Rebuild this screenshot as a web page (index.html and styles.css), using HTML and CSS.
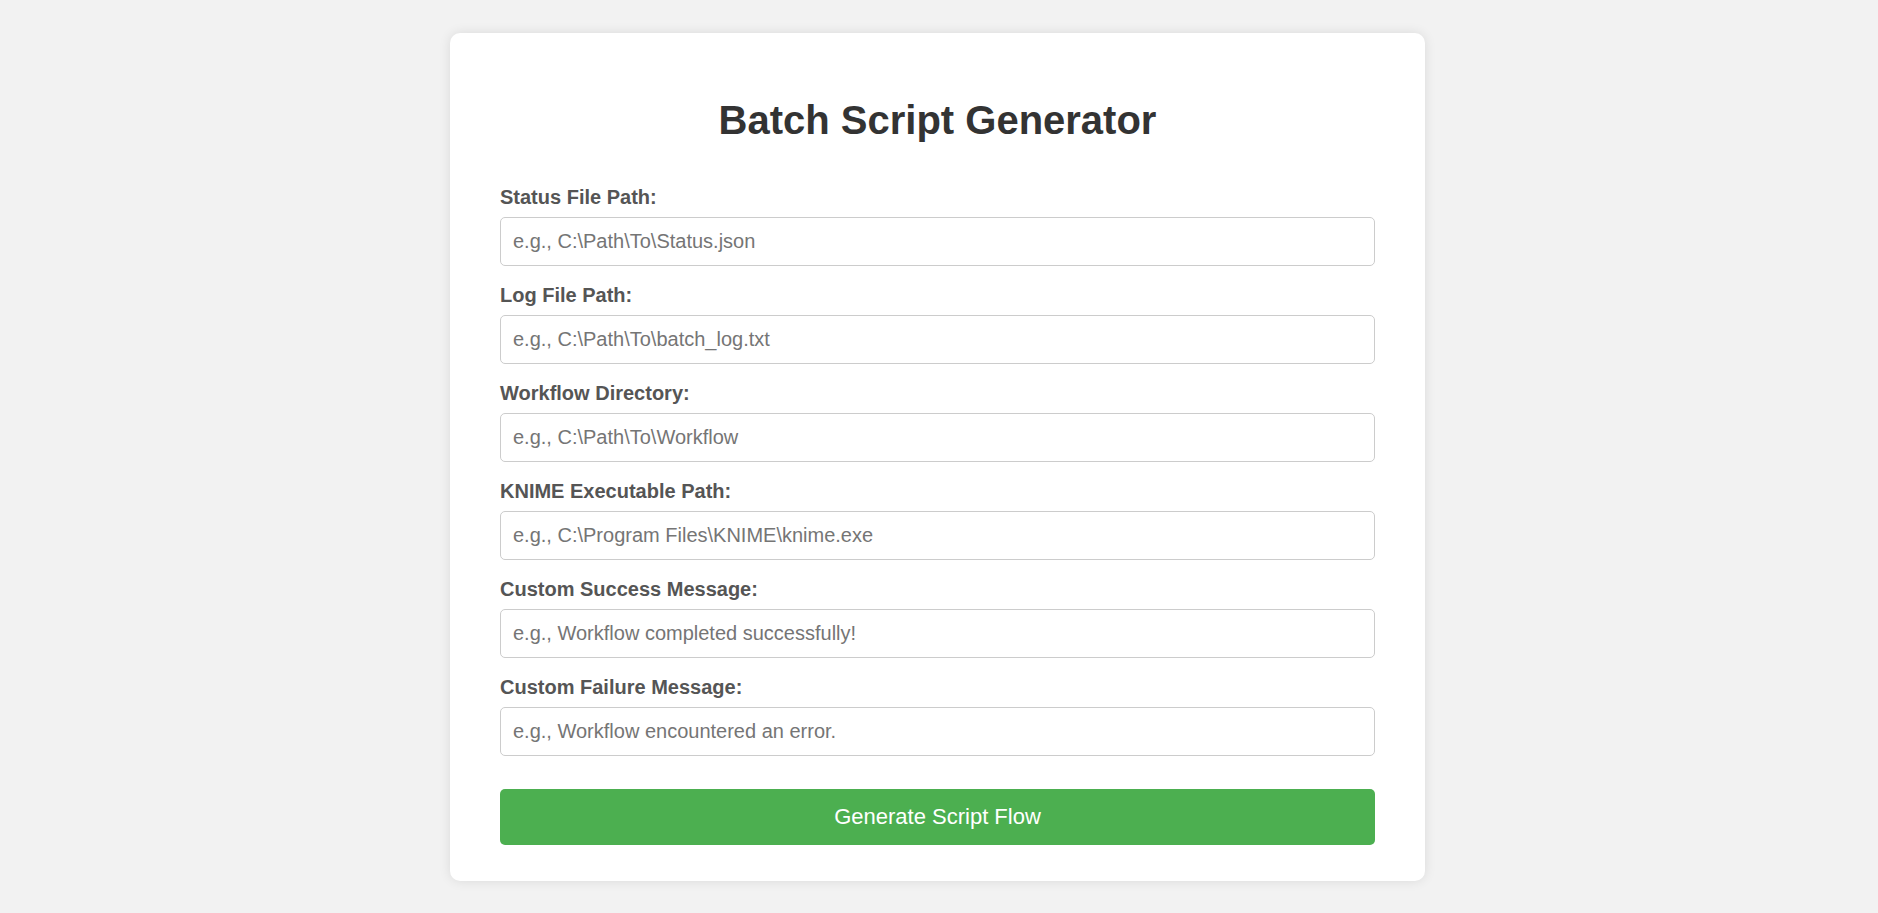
FILE: index.html
```html
<!DOCTYPE html>
<html lang="en">
<head>
  <meta charset="UTF-8" />
  <meta name="viewport" content="width=device-width, initial-scale=1.0"/>
  <title>Batch Script Generator</title>
  <link rel="stylesheet" href="styles.css">
</head>
<body>
  <div class="container">
    <h1>Batch Script Generator</h1>
    <form id="scriptForm">
      <label for="statusFile">Status File Path:</label>
      <input type="text" id="statusFile" placeholder="e.g., C:\Path\To\Status.json">

      <label for="logFile">Log File Path:</label>
      <input type="text" id="logFile" placeholder="e.g., C:\Path\To\batch_log.txt">

      <label for="workflowDir">Workflow Directory:</label>
      <input type="text" id="workflowDir" placeholder="e.g., C:\Path\To\Workflow">

      <label for="knimePath">KNIME Executable Path:</label>
      <input type="text" id="knimePath" placeholder="e.g., C:\Program Files\KNIME\knime.exe">

      <label for="successMsg">Custom Success Message:</label>
      <input type="text" id="successMsg" placeholder="e.g., Workflow completed successfully!">

      <label for="failureMsg">Custom Failure Message:</label>
      <input type="text" id="failureMsg" placeholder="e.g., Workflow encountered an error.">

      <button type="button" class="generate">Generate Script Flow</button>
    </form>
  </div>
</body>
</html>
```

FILE: styles.css
```css
* {
  box-sizing: border-box;
}
body {
  background: #f2f2f2;
  font-family: 'Liberation Sans', Arial, sans-serif;
  margin: 0;
  padding: 33px 3px 33px 0;
}
.container {
  background: #fff;
  width: 975px;
  margin: 0 auto;
  padding: 37px 50px 36px;
  border-radius: 10px;
  box-shadow: 0 0 12px rgba(0,0,0,0.1);
}
h1 {
  text-align: center;
  color: #333;
  font-size: 40px;
  margin: 28px 0 43px;
}
label {
  display: block;
  font-weight: bold;
  font-size: 20px;
  color: #555;
  margin-bottom: 8px;
}
input {
  display: block;
  width: 100%;
  padding: 12px 12px;
  font-size: 20px;
  font-family: inherit;
  border: 1px solid #ccc;
  border-radius: 5px;
  margin-bottom: 18px;
}
input::placeholder {
  color: #757575;
}
.generate {
  display: block;
  width: 100%;
  margin-top: 33px;
  padding: 15px;
  font-size: 22px;
  font-family: inherit;
  background: #4caf50;
  color: #fff;
  border: none;
  border-radius: 5px;
  cursor: pointer;
}
.generate:hover {
  background: #45a049;
}
```
